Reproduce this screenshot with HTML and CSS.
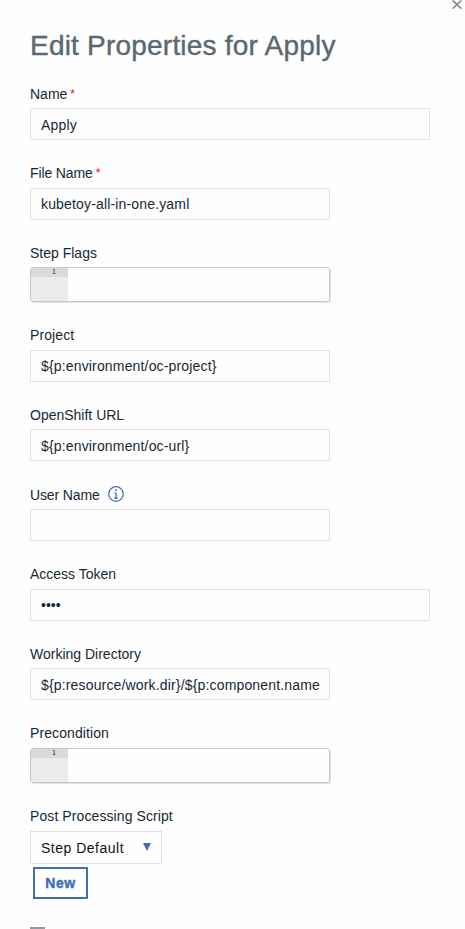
FILE: index.html
```html
<!DOCTYPE html>
<html lang="en">
<head>
<meta charset="utf-8">
<title>Edit Properties for Apply</title>
<link rel="stylesheet" href="styles.css">
</head>
<body>
<main class="dialog">
  <svg class="close" viewBox="0 0 10 10" aria-label="Close"><path d="M.7.4 9.3 8.6M9.3.4.7 8.6"/></svg>
  <h1 class="title">Edit Properties for Apply</h1>
  <form class="form">
    <div class="field"><label class="label"><span>Name</span><span class="req">*</span></label><div class="input wide"><span>Apply</span></div></div>
    <div class="field"><label class="label tight"><span>File Name</span><span class="req">*</span></label><div class="input"><span>kubetoy-all-in-one.yaml</span></div></div>
    <div class="field"><label class="label"><span>Step Flags</span></label><div class="editor"><div class="gutter"><span class="line">1</span></div></div></div>
    <div class="field"><label class="label loose"><span>Project</span></label><div class="input"><span>${p:environment/oc-project}</span></div></div>
    <div class="field"><label class="label"><span>OpenShift URL</span></label><div class="input"><span>${p:environment/oc-url}</span></div></div>
    <div class="field"><label class="label tight"><span>User Name</span><svg class="info" viewBox="0 0 16 16"><circle cx="8" cy="8" r="7.3"/><path d="M8 6.6V12M6.6 7.1H8M6.3 12h3.4"/><path class="dot" d="M7.1 3.4h1.8v1.7H7.1z"/></svg></label><div class="input"></div></div>
    <div class="field"><label class="label"><span>Access Token</span></label><div class="input wide"><span class="secret">••••</span></div></div>
    <div class="field"><label class="label"><span>Working Directory</span></label><div class="input"><span>${p:resource/work.dir}/${p:component.name</span></div></div>
    <div class="field"><label class="label loose"><span>Precondition</span></label><div class="editor"><div class="gutter"><span class="line">1</span></div></div></div>
    <div class="field last"><label class="label loose"><span>Post Processing Script</span></label><div class="select"><span>Step Default</span><svg class="arrow" viewBox="0 0 8 8"><path d="M0 0h8L4 8z"/></svg></div><button type="button" class="new">New</button></div>
  </form>
  <div class="toggle"></div>
</main>
</body>
</html>
```
FILE: styles.css
```css
* { box-sizing: border-box; }
html { background: #fefefe; overflow: hidden; }
body {
  margin: 0;
  height: 929px;
  overflow: hidden;
  background: #fefefe;
  color: #152935;
  font: 14px/20px "Liberation Sans", Arial, sans-serif;
}
.dialog { position: relative; padding: 26px 35px 0 30px; }
.close { position: absolute; top: 0; right: 3px; width: 10px; height: 10px; fill: none; stroke: #83929b; stroke-width: 1.8; }
.title { margin: 0 0 14px; font-size: 28px; line-height: 40px; font-weight: 400; letter-spacing: .21px; color: #5a6872; white-space: nowrap; -webkit-text-stroke: .4px #5a6872; }
.form { display: flex; flex-direction: column; gap: 19.6px; }
.label { display: flex; align-items: center; height: 28px; padding-bottom: .9px; white-space: nowrap; }
.tight { letter-spacing: -.12px; }
.loose { letter-spacing: .09px; }
.req { margin-left: 3px; color: #f00; font-size: 12px; }
.input { display: flex; align-items: center; width: 300px; height: 32px; padding: 1px 10px 0; border: 1px solid #dfe1e3; letter-spacing: .16px; white-space: nowrap; overflow: hidden; }
.wide { width: 400px; }
.secret { letter-spacing: 0; }
.editor { width: 300px; height: 35px; border: 1px solid #c5c7c7; border-radius: 3px; box-shadow: 1px 1px 1px #e2e2e2; overflow: hidden; }
.gutter { width: 37px; height: 100%; background: #ebebeb; }
.line { display: block; height: 9px; padding-right: 12px; background: #dadada; color: #333; font: 7px/8px "DejaVu Sans Mono", monospace; text-align: right; }
.info { width: 16px; height: 16px; margin: -1px 0 0 8px; fill: none; stroke: #3d70b2; stroke-width: 1.3; }
.info .dot { fill: #3d70b2; stroke: none; }
.select { display: flex; align-items: center; justify-content: space-between; width: 132px; height: 33px; margin-top: .6px; padding: 1px 10px 0; border: 1px solid #dfe1e5; color: #111; letter-spacing: .5px; }
.arrow { width: 8px; height: 8px; margin-top: -2px; fill: #3d70b2; }
.new { display: block; width: 55px; height: 32px; margin: 3px 0 0 3px; padding: 0; border: 2px solid #3d70b2; background: #fff; color: #3d70b2; font: bold 14px/20px "Liberation Sans", Arial, sans-serif; letter-spacing: .6px; -webkit-text-stroke: .4px #3d70b2; }
.toggle { width: 15px; height: 15px; margin-top: 28px; border: 2px solid #8c9ba5; }
```
